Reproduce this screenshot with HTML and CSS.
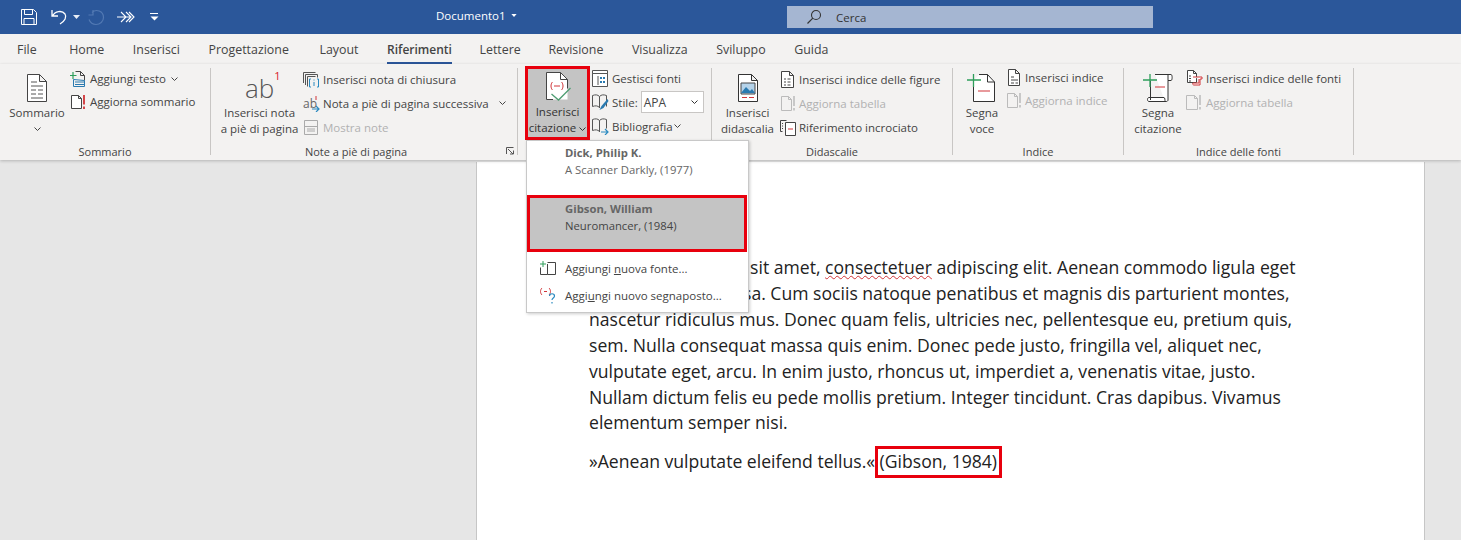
FILE: index.html
```html
<!DOCTYPE html>
<html lang="it">
<head>
<meta charset="utf-8">
<title>Documento1</title>
<link rel="stylesheet" href="styles.css">
</head>
<body>
<header class="titlebar">
  <div class="qat">
    <svg class="q-save" width="18" height="18" viewBox="0 0 18 18"><path d="M1.500 1.500h12l3 3v12h-15z M4.500 1.500v5h8v-5 M4 16.500v-6h10v6" fill="none" stroke="#fff" stroke-width="1"/></svg>
    <svg class="q-undo" width="18" height="18" viewBox="0 0 18 18"><path d="M2 2v6h6 M2.500 8C5 3 12 2 15 6c2 3 0 7-5 10" fill="none" stroke="#fff" stroke-width="1.300"/></svg>
    <svg class="q-caret" width="7" height="4" viewBox="0 0 7 4"><path d="M0 0h7L3.500 4z" fill="#e8edf5"/></svg>
    <svg class="q-redo" width="18" height="18" viewBox="0 0 18 18"><path d="M6 2v5H1.500 M5 4.500C9 .5 16.500 3 16.500 9.500c0 4-3.500 7-7.500 7s-6-2.500-7-5" fill="none" stroke="#5279b3" stroke-width="1.200"/></svg>
    <svg class="q-more" width="18" height="14" viewBox="0 0 18 14"><path d="M0 7h13 M4 2l5 5-5 5 M9 2l5 5-5 5 M12 2l5 5-5 5" fill="none" stroke="#fff" stroke-width="1.100"/></svg>
    <svg class="q-cust" width="9" height="8" viewBox="0 0 9 8"><path d="M0 .5h8" stroke="#fff"/><path d="M.5 3.500h8L4.500 7.500z" fill="#fff"/></svg>
  </div>
  <div class="doc-title">Documento1 <svg width="6" height="3" viewBox="0 0 7 4"><path d="M0 0h7L3.500 4z" fill="#fff"/></svg></div>
  <div class="search">
    <svg width="16" height="16" viewBox="0 0 16 16"><circle cx="10" cy="6" r="4.500" fill="none" stroke="#333" stroke-width="1.100"/><path d="M6.800 9.200 1.500 14.500" stroke="#333" stroke-width="1.200"/></svg>
    <span>Cerca</span>
  </div>
</header>

<nav class="tabs">
  <span class="tab">File</span><span class="tab">Home</span><span class="tab">Inserisci</span><span class="tab">Progettazione</span><span class="tab">Layout</span><span class="tab active">Riferimenti</span><span class="tab">Lettere</span><span class="tab">Revisione</span><span class="tab">Visualizza</span><span class="tab">Sviluppo</span><span class="tab">Guida</span>
</nav>

<section class="ribbon">
  <div class="group g1">
    <div class="body">
      <div class="large w-somm">
        <svg class="big" width="24" height="30" viewBox="0 0 24 30"><path d="M2.500 1.500h12l7 7v20h-19z M14.500 1.500v7h7" fill="#fff" stroke="#444"/><path d="M6 9h6 M6 13h12 M6 17h5 M13 17h5 M6 21h5 M13 21h5 M6 25h12" stroke="#555"/></svg>
        <span class="lbl">Sommario</span>
        <svg class="chev" width="7" height="4" viewBox="0 0 7 4"><path d="M.5.500l3 3 3-3" fill="none" stroke="#444"/></svg>
      </div>
      <div class="small col-a">
        <div class="row tall"><svg width="16" height="16" viewBox="0 0 16 16"><path d="M5.500.500h5l4 4v5" fill="none" stroke="#444"/><path d="M10.500.500v4h4" fill="none" stroke="#444"/><path d="M3 1v7 M0 4.500h6.500" stroke="#2e9e5b" stroke-width="1.200"/><path d="M3.500 8.500v7h11v-6z M5 11h9 M5 13.500h9" fill="none" stroke="#2a7ab0"/></svg><span>Aggiungi testo</span><svg class="chev-s" width="7" height="4" viewBox="0 0 7 4"><path d="M.5.500l3 3 3-3" fill="none" stroke="#444"/></svg></div>
        <div class="row tall"><svg width="16" height="16" viewBox="0 0 16 16"><path d="M1.500 1.500h7l3 3v10h-10z M8.500 1.500v3h3" fill="#fff" stroke="#444"/><path d="M14 1v9.500 M14 12.500v2.500" stroke="#d13438" stroke-width="1.800"/></svg><span>Aggiorna sommario</span></div>
      </div>
    </div>
    <div class="glabel">Sommario</div>
  </div>

  <div class="group g2">
    <div class="body">
      <div class="large w-nota">
        <div class="ab">ab<sup>1</sup></div>
        <span class="lbl">Inserisci nota<br>a piè di pagina</span>
      </div>
      <div class="small col-b">
        <div class="row"><svg width="17" height="17" viewBox="0 0 17 17"><path d="M.5 12V1.500h12 M2.500 14V3.500h12v3 M4.500 15.500V5.500h8" fill="none" stroke="#555"/><path d="M8 8h-1.500v8H8 M14 8h1.500v8H14 M11 8.500v1 M11 11v4" fill="none" stroke="#2a8ac0"/></svg><span>Inserisci nota di chiusura</span></div>
        <div class="row"><svg width="17" height="17" viewBox="0 0 17 17"><text x="0" y="13" class="mini-ab">ab</text><path d="M13 1v4" stroke="#d13438"/><path d="M9 14h7 M13 11l3 3-3 3" fill="none" stroke="#2a8ac0" stroke-width="1.200"/></svg><span>Nota a piè di pagina successiva</span><svg class="chev-far" width="7" height="4" viewBox="0 0 7 4"><path d="M.5.500l3 3 3-3" fill="none" stroke="#444"/></svg></div>
        <div class="row off"><svg width="17" height="17" viewBox="0 0 17 17"><path d="M1.500 1.500h13v14h-13z M1.500 7.500h13 M4 10h8 M4 12h8" fill="none" stroke="#aaa"/></svg><span>Mostra note</span></div>
      </div>
    </div>
    <div class="glabel lb2">Note a piè di pagina</div>
    <svg class="launcher" width="8" height="8" viewBox="0 0 8 8"><path d="M.5 7V.5H7.500 M2 2l5 5 M4 7h3.500V3.500" fill="none" stroke="#555"/></svg>
  </div>

  <div class="group g3">
    <div class="body">
      <div class="large cite">
        <svg class="big" width="30" height="32" viewBox="0 0 30 32"><path d="M3.500.5h14l7 7v20h-21z" fill="#fff"/><path d="M10 27.500H3.500V.5h14l7 7v9 M17.500.5v7h7" fill="none" stroke="#444"/><path d="M9.500 10c-2 2-2 6 0 8 M18.500 10c2 2 2 6 0 8 M11 14h6" fill="none" stroke="#d13438"/><path d="M8.500 22l7 6 12-12" fill="none" stroke="#4f9e73" stroke-width="1.300"/></svg>
        <span class="lbl">Inserisci<br>citazione <svg width="7" height="4" viewBox="0 0 7 4"><path d="M.5.500l3 3 3-3" fill="none" stroke="#333"/></svg></span>
      </div>
      <div class="small col-c">
        <div class="row"><svg width="17" height="17" viewBox="0 0 17 17"><path d="M.5 2.500h15v14H.5z" fill="#fff" stroke="#555"/><path d="M.5 .500h15v3H.5z" fill="#fff" stroke="#555"/><path d="M6 6v9" stroke="#555"/><path d="M8 7h2v2H8z M11 7h2v2h-2z M8 11h2v2H8z M11 11h2v2h-2z" fill="#2a7ab0"/></svg><span>Gestisci fonti</span></div>
        <div class="row"><svg width="17" height="17" viewBox="0 0 17 17"><path d="M.5 1.500c3-1 5-1 7 1 2-2 4-2 7-1v11 M7.500 2.500V14 M.5 1.500v11c3-1 5-1 7 1" fill="none" stroke="#555"/><path d="M15.500 5l-6 7-2 4 4-2 5-7z" fill="#2a7ab0"/></svg><span>Stile:</span><div class="select">APA<svg width="7" height="4" viewBox="0 0 7 4"><path d="M.5.500l3 3 3-3" fill="none" stroke="#333"/></svg></div></div>
        <div class="row"><svg width="17" height="17" viewBox="0 0 17 17"><path d="M.5 1.500c3-1 5-1 7 1 2-2 4-2 7-1v9 M7.500 2.500V14 M.5 1.500v11c3-1 5-1 7 1" fill="none" stroke="#555"/><path d="M9 14h7 M13 11l3 3-3 3" fill="none" stroke="#2a8ac0" stroke-width="1.200"/></svg><span>Bibliografia</span><svg class="chev-b" width="7" height="4" viewBox="0 0 7 4"><path d="M.5.500l3 3 3-3" fill="none" stroke="#444"/></svg></div>
      </div>
    </div>
    <div class="glabel covered">Citazioni e bibliografia</div>
  </div>

  <div class="group g4">
    <div class="body">
      <div class="large w-dida">
        <svg class="big" width="24" height="30" viewBox="0 0 24 30"><path d="M2.500 1.500h13l6 6v21h-19z M15.500 1.500v6h6" fill="#fff" stroke="#333"/><path d="M5 10h14v11H5z" fill="#b5d3ea" stroke="#444"/><path d="M5 20l5-6 4 4 2-2 3 4z" fill="#2a7ab0"/><path d="M6 24.500h5 M13 24.500h5" stroke="#d13438"/></svg>
        <span class="lbl">Inserisci<br>didascalia</span>
      </div>
      <div class="small col-d">
        <div class="row"><svg width="16" height="17" viewBox="0 0 16 17"><path d="M1.500 .5h8l4 4v12h-12z M9.500 .5v4h4 M4 8h2 M7.500 8h3 M4 11h2 M7.500 11h3 M4 14h2 M7.500 14h3" fill="#fff" stroke="#444"/></svg><span>Inserisci indice delle figure</span></div>
        <div class="row off"><svg width="16" height="17" viewBox="0 0 16 17"><path d="M1.500 1.500h7l3 3v11h-10z M8.500 1.500v3h3" fill="none" stroke="#bbb"/><path d="M14 1v10 M14 13v2.500" stroke="#bbb" stroke-width="1.500"/></svg><span>Aggiorna tabella</span></div>
        <div class="row"><svg width="16" height="17" viewBox="0 0 16 17"><path d="M.5 1.500h6 M.5 1.500v11h2 M2 4.500h1 M2 7h1 M2 9.500h1" fill="none" stroke="#444"/><path d="M5.500 3.500h10v13h-10z" fill="#fff" stroke="#444"/><path d="M8 10h5" stroke="#d13438"/></svg><span>Riferimento incrociato</span></div>
      </div>
    </div>
    <div class="glabel">Didascalie</div>
  </div>

  <div class="group g5">
    <div class="body">
      <div class="large w-voce">
        <svg class="big" width="30" height="30" viewBox="0 0 30 30"><path d="M6.500 8V28.500h21V9l-7-7.500H12 M20.500 1.500V9h7" fill="#fff" stroke="#333"/><path d="M6.500 1v13 M0 7h14" stroke="#2e9e5b" stroke-width="1.300"/><path d="M11 18h12" stroke="#d13438"/></svg>
        <span class="lbl">Segna<br>voce</span>
      </div>
      <div class="small col-e">
        <div class="row tall"><svg width="15" height="17" viewBox="0 0 15 17"><path d="M1.500 .5h7l4 4v12h-11z M8.500 .5v4h4 M4 8h3 M4 11h7 M4 14h3 M8.500 14h2.500" fill="#fff" stroke="#444"/></svg><span>Inserisci indice</span></div>
        <div class="row tall off"><svg width="15" height="17" viewBox="0 0 15 17"><path d="M.5 1.500h7l3 3v11H.5z M7.500 1.500v3h3" fill="none" stroke="#bbb"/><path d="M13 1v10 M13 13v2.500" stroke="#bbb" stroke-width="1.500"/></svg><span>Aggiorna indice</span></div>
      </div>
    </div>
    <div class="glabel">Indice</div>
  </div>

  <div class="group g6">
    <div class="body">
      <div class="large w-segn">
        <svg class="big" width="30" height="30" viewBox="0 0 30 30"><path d="M7.500 8v19 M12 1.500h16c1.500 0 1.500 6 0 6h-3V27c0 1-1 1.500-2 1.500H6c-2 0-2-4 0-4h15c1 0 1 3 1 4 M25 7.500V2" fill="#fff" stroke="#333"/><path d="M7 1v13 M0 7h14" stroke="#2e9e5b" stroke-width="1.300"/><path d="M12 14h10" stroke="#d13438"/></svg>
        <span class="lbl">Segna<br>citazione</span>
      </div>
      <div class="small col-f">
        <div class="row"><svg width="17" height="17" viewBox="0 0 17 17"><path d="M1.500 .5h6l3 3v9h-9z M7.500 .5v3h3 M3 6h2 M3 8.500h2 M3 11h2" fill="#fff" stroke="#444"/><path d="M7 7h9v2H14v6H8c-1 0-2-1-1-2h6V9" fill="#fff" stroke="#d13438"/></svg><span>Inserisci indice delle fonti</span></div>
        <div class="row off"><svg width="17" height="17" viewBox="0 0 17 17"><path d="M.5 1.500h8l3 3v11H.5z M8.500 1.500v3h3" fill="none" stroke="#bbb"/><path d="M14 1v10 M14 13v2.500" stroke="#bbb" stroke-width="1.500"/></svg><span>Aggiorna tabella</span></div>
      </div>
    </div>
    <div class="glabel">Indice delle fonti</div>
  </div>
</section>

<main class="workspace">
  <article class="page">
    <p class="para">
      <span class="line"><span class="covered">Lorem ipsum dolor </span>sit amet, <span class="spell">consectetuer</span> adipiscing elit. Aenean commodo ligula eget</span>
      <span class="line"><span class="covered">dolor. Aenean mas</span>sa. Cum sociis natoque penatibus et magnis dis parturient montes,</span>
      <span class="line">nascetur ridiculus mus. Donec quam felis, ultricies nec, pellentesque eu, pretium quis,</span>
      <span class="line">sem. Nulla consequat massa quis enim. Donec pede justo, fringilla vel, aliquet nec,</span>
      <span class="line">vulputate eget, arcu. In enim justo, rhoncus ut, imperdiet a, venenatis vitae, justo.</span>
      <span class="line">Nullam dictum felis eu pede mollis pretium. Integer tincidunt. Cras dapibus. Vivamus</span>
      <span class="line">elementum semper nisi.</span>
    </p>
    <p class="para">»Aenean vulputate eleifend tellus.« <span class="cited">(Gibson, 1984)</span></p>
  </article>
</main>

<aside class="menu">
  <div class="src"><b>Dick, Philip K.</b><span>A Scanner Darkly, (1977)</span></div>
  <div class="src sel"><b>Gibson, William</b><span>Neuromancer, (1984)</span></div>
  <div class="cmds">
    <div class="cmd"><svg width="18" height="15" viewBox="0 0 18 15"><path d="M8.500 1.500h8v12h-8 M1.500 6.500v7h7V3" fill="none" stroke="#444"/><path d="M4 0v6 M1 3h6" stroke="#2e9e5b"/></svg><span>Aggiungi <u>n</u>uova fonte...</span></div>
    <div class="cmd"><svg width="18" height="17" viewBox="0 0 18 17"><path d="M3 1C1 3 1 6 3 8 M10 1c2 2 2 5 0 7 M5 4.500h3" fill="none" stroke="#d13438"/><path d="M10.500 9c0-3 5-3 5 0 0 2-2.500 2-2.500 4 M13 15v1.500" fill="none" stroke="#2a8ac0" stroke-width="1.200"/></svg><span>Aggi<u>u</u>ngi nuovo segnaposto...</span></div>
  </div>
</aside>
</body>
</html>
```
FILE: styles.css
```css
* { box-sizing: border-box; }
html, body { margin: 0; height: 540px; overflow: hidden; }
body {
  position: relative;
  display: flex;
  flex-direction: column;
  font-family: "Open Sans", "Noto Sans", sans-serif;
  font-size: 11.5px;
  color: #444;
  background: #e6e6e6;
}
svg { flex: none; display: block; }
.covered { visibility: hidden; }

.titlebar { height: 34px; background: #2b579a; display: flex; align-items: center; color: #fff; flex: none; }
.qat { display: flex; align-items: center; width: 436px; padding-left: 20px; }
.q-undo { margin-left: 12px; }
.q-caret { margin-left: 5px; }
.q-redo { margin-left: 7px; }
.q-more { margin-left: 12px; }
.q-cust { margin-left: 15px; }
.doc-title { width: 351px; display: flex; align-items: center; gap: 5px; font-size: 11.5px; padding-bottom: 3px; }
.search { width: 366px; height: 22px; background: #a5b6d2; color: #333; display: flex; align-items: center; padding-left: 19px; gap: 14px; }

.tabs { height: 30px; background: #f3f2f1; display: flex; padding-left: 17px; gap: 28.600px; font-size: 12.400px; color: #444; flex: none; }
.tab { line-height: 31px; height: 30px; white-space: nowrap; }
.tab:first-child { margin-right: 4px; }
.tab:nth-child(5) { margin-left: 2px; }
.tab:nth-child(7), .tab:nth-child(8) { margin-left: -1px; }
.tab.active { font-weight: 600; font-size: 12px; border-bottom: 2px solid #2b579a; }

.ribbon { height: 96px; background: #f3f2f1; display: flex; padding-top: 4px; flex: none; box-shadow: 0 1px 3px rgba(0,0,0,.22); position: relative; z-index: 1; }
.group { height: 87px; border-right: 1px solid #c8c6c4; display: flex; flex-direction: column; position: relative; flex: none; }
.g1 { width: 211px; }
.g2 { width: 307px; }
.g3 { width: 194px; }
.g4 { width: 241px; }
.g5 { width: 171px; }
.g6 { width: 230px; }
.body { flex: 1; display: flex; min-height: 0; }
.glabel { text-align: center; height: 16px; line-height: 16px; font-size: 11px; margin-bottom: -5px; color: #444; white-space: nowrap; }
.lb2 { padding-right: 16px; }

.large { display: flex; flex-direction: column; align-items: center; padding-top: 4px; text-align: center; flex: none; }
.large .big { height: 32px; }
.lbl { line-height: 16px; margin-top: 1px; white-space: nowrap; }
.lbl svg { display: inline-block; vertical-align: middle; }
.chev { margin-top: 6px; }
.w-somm { width: 58px; margin-left: 8px; }
.w-nota { width: 77px; margin-left: 10px; }
.w-dida { width: 55px; margin-left: 8px; }
.w-voce { width: 34px; margin-left: 12px; }
.w-segn { width: 48px; margin-left: 10px; }
.cite { width: 65px; height: 74px; margin: -2px 0 0 7px; background: #c4c4c4; border: 3px solid #e8000d; padding-top: 3px; color: #333; }
.cite .lbl { margin-top: 0; }

.ab { font-size: 26px; line-height: 32px; color: #555; height: 32px; font-weight: 300; position: relative; }
.ab sup { position: absolute; font-size: 11px; line-height: 12px; font-weight: 400; color: #d8202a; top: -2px; left: 100%; }
.mini-ab { font-size: 12px; fill: #666; font-family: "Open Sans", sans-serif; }

.small { display: flex; flex-direction: column; flex: none; }
.col-a { margin: -1px 0 0 4px; }
.col-b { margin: -1px 0 0 5px; }
.col-c { margin: -2px 0 0 2px; }
.col-d { margin: -1px 0 0 5px; }
.col-e { margin: -2px 0 0 8px; }
.col-f { margin: -2px 0 0 4px; }
.row { display: flex; align-items: center; height: 24px; gap: 3px; white-space: nowrap; }
.row.tall { height: 23px; }
.col-a .row { gap: 4px; }
.off { color: #b1b1b1; }
.chev-s { margin-left: 1px; }
.chev-b { margin-left: -2px; }
.chev-far { margin-left: 7px; }
.select { width: 63px; height: 22px; background: #fff; border: 1px solid #c8c6c4; display: flex; align-items: center; justify-content: space-between; padding: 0 5px 0 2px; font-size: 12px; }
.launcher { position: absolute; right: 3px; bottom: 0; }

.workspace { flex: 1; padding-left: 476px; padding-right: 36px; min-height: 0; }
.page { height: 100%; background: #fff; border-left: 1px solid #c6c6c6; border-right: 1px solid #c6c6c6; padding: 93px 0 0 112px; color: #222; font-size: 17.600px; line-height: 25.900px; margin-top: 2px; }
.para { margin: 0 0 13px; }
.line { display: block; white-space: nowrap; }
.spell { text-decoration: underline wavy #d13438 1px; }
.cited { display: inline-block; outline: 3px solid #e8000d; margin-left: -2px; padding: 0 2px; }

.menu { position: absolute; left: 526px; top: 140px; width: 223px; height: 173px; background: #fff; border: 1px solid #c8c8c8; box-shadow: 1px 1px 3px rgba(0,0,0,.2); z-index: 3; color: #666; }
.src { height: 54px; padding: 3px 0 0 38px; display: flex; flex-direction: column; line-height: 17px; font-size: 11.300px; }
.src b { font-weight: 700; color: #666; }
.src.sel { height: 57px; width: 220px; background: #c4c4c4; border: 3px solid #e8000d; padding: 2px 0 0 35px; color: #444; }
.cmds { padding-top: 3px; margin: 0 1px; }
.cmd { height: 27px; display: flex; align-items: center; padding-left: 11px; gap: 8px; color: #444; white-space: nowrap; }
```
